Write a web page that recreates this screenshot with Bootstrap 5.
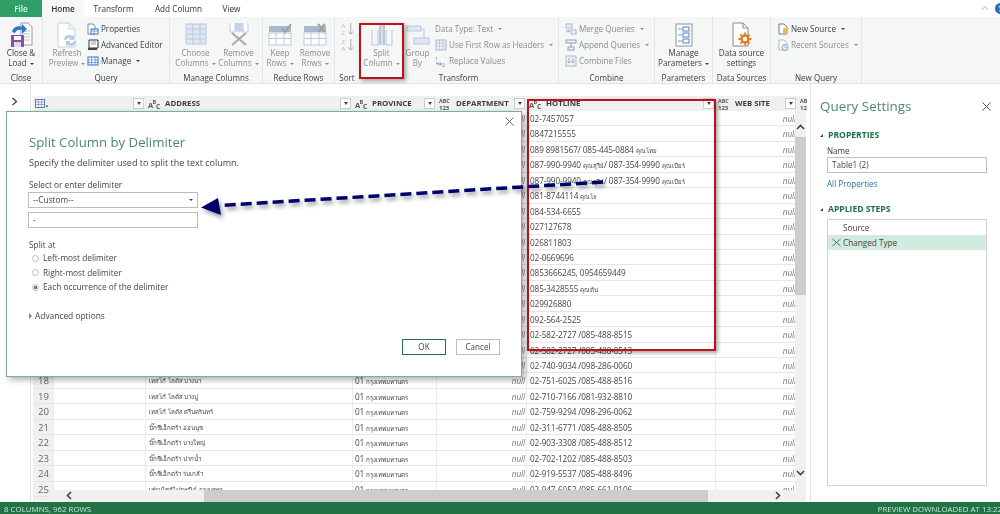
<!DOCTYPE html>
<html lang="th">
<head>
<meta charset="utf-8">
<title>Split Column by Delimiter</title>
<link rel="stylesheet" href="https://cdn.jsdelivr.net/npm/bootstrap@5.3.0/dist/css/bootstrap.min.css">
<style>
html,body{height:514px;width:1000px;overflow:hidden}
body{font-family:"Open Sans","Noto Sans",sans-serif;font-size:8.1px;color:#3c3c3c;background:#fff;line-height:1.2;filter:blur(.3px)}
.tabstrip{height:17px;align-items:stretch}
.tabitem{display:flex;align-items:center;justify-content:center;font-size:8.2px;color:#333;text-decoration:none;padding-top:1px}
.tabfile{width:42px;background:#2f9e67;color:#e8f5ee;font-weight:600}
.tabhome{width:42px;background:#f6f8f7;font-weight:600}
.tabtransform{width:59px}
.tabaddcol{width:71px}
.tabview{width:35px}
.wintools{margin-left:auto;gap:6px}
.helpdot{width:11px;height:11px;border-radius:50%;background:#1f74bd;margin-right:-6px;margin-top:3px;color:#fff;font-size:8px;font-weight:700;text-align:center;line-height:11px}
.ribbon{height:67px;background:#f5f7f6;border-bottom:1px solid #dde5e0}
.rgroup{display:flex;flex-direction:column;border-right:1px solid #e3e8e5;flex:none}
.rgroup.noline{border-right:0}
.rbody{display:flex;flex:1;min-height:0}
.rbodyinset{padding-left:6px}
.rlabel{height:13px;line-height:12px;text-align:center;color:#3c3c3c;font-size:8.1px;margin-bottom:-2px}
.bigbtn{display:flex;flex-direction:column;align-items:center;flex:none;text-align:center;line-height:10px;padding-top:5px;color:#3c3c3c}
.bigbtn svg{height:26px;width:26px;flex:none}
.bigbtn.isoff,.isoff{color:#8c8c8c}
.smalllist{display:flex;flex-direction:column;padding-top:4px;flex:none}
.sortstack{gap:2px;padding-top:5px}
.smallitem{height:16px;display:flex;align-items:center;gap:2px;white-space:nowrap}
.smallitem svg{width:12px;height:12px;flex:none}
.caretdn{display:inline-block;border-left:2px solid transparent;border-right:2px solid transparent;border-top:2.5px solid currentColor;margin-left:3px;vertical-align:middle}
.workarea{height:418px;min-height:0}
.collapsebar{width:31px;border-right:1px solid #e1e5e3;flex:none;padding:12px 0 0 10px}
.gridwrap{width:776px;padding:12px 0 0 2px;flex:none;position:relative;overflow:hidden}
.hrow,.drow{display:grid;grid-template-columns:21px 92px 207px 84px 90px 189px 82px 30px;width:765px}
.hrow{height:15px;background:#f0f0f0;font-weight:700;color:#3c3c3c;font-size:7.8px;width:785px}
.hcell{display:flex;align-items:center;position:relative;white-space:nowrap;padding-left:2px;gap:4px;overflow:hidden}
.filterbox{position:absolute;right:2px;top:2px;width:11px;height:11px;background:#fff;border:1px solid #ccc;display:flex;align-items:center;justify-content:center}
.filterbox::after{content:"";border-left:2.5px solid transparent;border-right:2.5px solid transparent;border-top:3px solid #444}
.typeicon{width:13px;height:13px;flex:none}
.gridbody{height:392px;overflow:hidden;position:relative}
.drow{height:15.45px;font-size:8.2px;letter-spacing:-.1px;color:#444;border-bottom:1px solid #e6e6e6;line-height:14.5px;background:#fff}
.drow>div{border-right:1px solid #ececec;padding:1px 3px 0;white-space:nowrap;overflow:hidden}
.drow .rownum{background:#f0f0f0;border-right:0;padding:1px 0 0;text-align:center;font-size:9.6px;letter-spacing:0;color:#666}
.drow .thaicell{font-size:6.2px;letter-spacing:0;padding-left:3px}
.thaitiny{font-size:6.2px;letter-spacing:0}
.drow .nullcell{font-style:italic;text-align:right;padding-right:1px;font-size:8.2px;color:#777}
.drow .provcell{padding-left:2px}
.vscroll{position:absolute;left:764px;top:27px;width:11px;height:379px;background:#f0f0f0}
.vthumb{position:absolute;top:26px;left:0;width:11px;height:158px;background:#cdcdcd}
.chevup{left:1px;top:12px}
.chevdown{left:1px;top:357px}
.hscroll{position:absolute;left:22px;bottom:0;width:753px;height:12px;background:#f0f0f0}
.hthumb{position:absolute;left:151px;top:0;height:12px;width:504px;background:#cdcdcd}
.chevleft{left:12px;top:1px}
.chevright{left:720px;top:1px}
.chev{position:absolute;width:9px;height:9px}
.settingspane{flex:1;border-left:1px solid #e1e5e3;margin-left:3px;padding:0 12px 0 9px;position:relative;color:#3c3c3c}
.panetitle{font-size:13.4px;color:#4b8873;margin:12px 0 14px;font-weight:400;line-height:20px}
.paneclose{position:absolute;right:9px;top:18px;width:9px;height:9px}
.sectionhead{font-size:8.6px;font-weight:700;color:#217346;margin:0;height:11px;line-height:11px;display:flex;align-items:center;gap:5px}
.sectionhead::before{content:"";border-left:3px solid transparent;border-bottom:3px solid #444}
.paneinput{height:16px;margin:1px 0 0 7px;border:1px solid #bfbfbf;padding:0 4px;line-height:14px;width:160px;color:#444}
.panelabel{margin:5px 0 0 7px;height:10px;line-height:10px}
.panelink{display:block;margin:6px 0 15px 7px;color:#2d6fb7;text-decoration:none;line-height:10px}
.steplist{margin:4px 0 0 7px;width:160px;height:267px;border:1px solid #d2d2d2;border-radius:0;display:block}
.stepitem{height:15px;line-height:15px;border:0;padding:0 0 0 15px;background:transparent;color:#444;font-size:8.2px;position:relative;display:block}
.stepitem.picked{background:#d3ebde}
.stepitem svg{position:absolute;left:4px;top:3px;width:9px;height:9px}
.statusbar{height:12px;background:#217346;color:#cfe3d8;font-size:7.9px;line-height:15px;padding-left:4px;overflow:hidden;white-space:nowrap}
.statusright{margin-left:auto;margin-right:-2px}
.splitdialog{position:absolute;left:6px;top:111px;width:516px;height:266px;background:#fff;border:1px solid #7fae98;box-shadow:3px 3px 6px rgba(0,0,0,.3);padding:20px 22px 0 22px;font-size:8.3px;color:#444}
.dlgclose{position:absolute;right:7px;top:5px;width:9px;height:9px}
.dlgtitle{font-size:13.2px;font-weight:400;color:#4b8873;line-height:20px;margin:0 0 5px}
.dlgtext{height:12px;line-height:12px;margin:0;white-space:nowrap}
.dlgintro{font-size:9px}
.dlgfirstlabel{margin-top:10px}
.dlgsplitlabel{margin-top:11px}
.dlgfield{width:170px;height:16px;border:1px solid #bdbdbd;padding:0 4px;line-height:14px;display:flex;justify-content:space-between;align-items:center;color:#444;background:#fff;margin:4px 0 0 -1px}
.dlgfield.firstfield{margin-top:1px}
.radioline{height:14.5px;display:flex;align-items:center;gap:4px;padding-left:3px}
.radiodot{width:7px;height:7px;border:1px solid #bbb;border-radius:50%;flex:none;background:#fff}
.radiodot.ison{background:radial-gradient(circle,#777 0 1.6px,#fff 2.1px)}
.advline{display:flex;align-items:center;gap:3px;margin-top:15.5px;height:12px;font-size:8.4px}
.advline::before{content:"";border-left:3px solid #888;border-top:3px solid transparent;border-bottom:3px solid transparent}
.dlgbtns{position:absolute;left:395px;top:227px;gap:10px}
.dlgbtn{height:16px;width:44px;padding:0;font-size:8.1px;line-height:14px;border-radius:0;border:1px solid #bdbdbd;background:#fff;color:#444}
.dlgbtn.isdefault{border-color:#217346}
.redmark{position:absolute;border:2px solid #c0101c;box-shadow:2px 2px 4px rgba(0,0,0,.35);pointer-events:none}
.redhotline{left:527px;top:99px;width:189px;height:252px}
.redsplit{left:359px;top:23px;width:45px;height:56px}
.arrowlayer{position:absolute;left:190px;top:170px;width:430px;height:50px;overflow:visible;filter:drop-shadow(2px 3px 2px rgba(0,0,0,.4))}
</style>
</head>
<body class="position-relative d-flex flex-column">

<nav class="nav tabstrip flex-nowrap">
  <a class="tabitem tabfile" href="#">File</a>
  <a class="tabitem tabhome" href="#">Home</a>
  <a class="tabitem tabtransform" href="#">Transform</a>
  <a class="tabitem tabaddcol" href="#">Add Column</a>
  <a class="tabitem tabview" href="#">View</a>
  <div class="d-flex wintools">
    <svg width="8" height="8" viewBox="0 0 8 8" class="mt-1"><path d="M1 5.500 4 2.500 7 5.500" fill="none" stroke="#aaa"/></svg>
    <div class="helpdot">?</div>
  </div>
</nav>

<div class="ribbon d-flex">
  <section class="rgroup" style="width:43px">
    <div class="rbody justify-content-center">
      <div class="bigbtn">
        <svg viewBox="0 0 26 26"><path d="M13 1h7l4 4v18H13z" fill="#fff" stroke="#9a9a9a"/><path d="M15 9h7M15 12h7M15 15h7M15 18h7" stroke="#bbb"/><path d="M4 10c1-5 6-7 10-5V2l5 5-5 5V8c-3-1-6 0-7 3z" fill="#2f76c6"/><rect x="3" y="13" width="13" height="12" fill="#8a4fa8"/><rect x="6" y="14" width="7" height="4" fill="#fff"/><rect x="6" y="20" width="7" height="5" fill="#e3d5ea"/></svg>
        <span>Close &amp;<br>Load<i class="caretdn"></i></span>
      </div>
    </div>
    <div class="rlabel">Close</div>
  </section>

  <section class="rgroup" style="width:127px">
    <div class="rbody ps-1">
      <div class="bigbtn isoff" style="width:40px">
        <svg viewBox="0 0 26 26"><path d="M4 1h11l6 6v18H4z" fill="#fff" stroke="#c5d3e6"/><path d="M15 1v6h6" fill="none" stroke="#c5d3e6"/><path d="M10 18a5 5 0 0 1 8-4l2-1v5h-5l1.500-1.500a3 3 0 0 0-4.500 1.500zM22 19a5 5 0 0 1-8 4l-2 1v-5h5l-1.500 1.500a3 3 0 0 0 4.500-1.500z" fill="#b9c9de"/></svg>
        <span>Refresh<br>Preview<i class="caretdn"></i></span>
      </div>
      <div class="smalllist">
        <div class="smallitem"><svg viewBox="0 0 12 12"><path d="M1 1h5l2 2v8H1z" fill="#fff" stroke="#888"/><rect x="4" y="6" width="7" height="5" fill="#fff" stroke="#2f76c6"/><path d="M4 8h7M7 6v5" stroke="#2f76c6" stroke-width=".6"/></svg>Properties</div>
        <div class="smallitem"><svg viewBox="0 0 12 12"><path d="M2 1h9v8H2z" fill="#fff" stroke="#333"/><path d="M1 9h9v2H1z" fill="#444"/><path d="M4 3h5M4 5h5" stroke="#999"/></svg>Advanced Editor</div>
        <div class="smallitem"><svg viewBox="0 0 12 12"><rect x="1" y="2" width="10" height="8" fill="#fff" stroke="#2f76c6"/><path d="M1 5h10M1 7.500h10M4.500 2v8M8 2v8" stroke="#2f76c6" stroke-width=".6"/></svg>Manage<i class="caretdn"></i></div>
      </div>
    </div>
    <div class="rlabel">Query</div>
  </section>

  <section class="rgroup" style="width:93px">
    <div class="rbody ps-1">
      <div class="bigbtn isoff" style="width:43px">
        <svg viewBox="0 0 26 26"><rect x="3" y="2" width="20" height="20" fill="#dfe7f2" stroke="#b9c9de"/><path d="M3 7h20M3 12h20M3 17h20M10 2v20M17 2v20" stroke="#b9c9de"/></svg>
        <span>Choose<br>Columns<i class="caretdn"></i></span>
      </div>
      <div class="bigbtn isoff" style="width:43px">
        <svg viewBox="0 0 26 26"><path d="M4 1v9h5V1M10 1v8h6V1M17 1v9h5V1" fill="#fff" stroke="#b9c9de"/><path d="M10 1h6v8h-6z" fill="#c5d3e6"/><path d="M6 11l14 12M20 11 6 23" stroke="#a9a9b3" stroke-width="2"/></svg>
        <span>Remove<br>Columns<i class="caretdn"></i></span>
      </div>
    </div>
    <div class="rlabel">Manage Columns</div>
  </section>

  <section class="rgroup" style="width:72px">
    <div class="rbody">
      <div class="bigbtn isoff" style="width:34px">
        <svg viewBox="0 0 26 26"><rect x="2" y="4" width="22" height="6" fill="#a9b9cd"/><rect x="2" y="11" width="22" height="12" fill="#fff" stroke="#b9c9de"/><path d="M2 16.500h22M9 11v12M17 11v12" stroke="#b9c9de"/><path d="M15 7l3 3 6-8" fill="none" stroke="#a0a0a8" stroke-width="2"/></svg>
        <span>Keep<br>Rows<i class="caretdn"></i></span>
      </div>
      <div class="bigbtn isoff" style="width:36px">
        <svg viewBox="0 0 26 26"><rect x="2" y="4" width="22" height="6" fill="#a9b9cd"/><rect x="2" y="11" width="22" height="12" fill="#fff" stroke="#b9c9de"/><path d="M2 16.500h22M9 11v12M17 11v12" stroke="#b9c9de"/><path d="M16 2l7 8M23 2l-7 8" stroke="#a0a0a8" stroke-width="2"/></svg>
        <span>Remove<br>Rows<i class="caretdn"></i></span>
      </div>
    </div>
    <div class="rlabel">Reduce Rows</div>
  </section>

  <section class="rgroup noline" style="width:24px">
    <div class="rbody justify-content-center">
      <div class="smalllist sortstack">
        <svg width="13" height="14" viewBox="0 0 13 15" aria-label="Sort ascending"><text x="0" y="6.500" font-size="6.500" fill="#a9b9cd">A</text><text x="0" y="13.500" font-size="6.500" fill="#a9b9cd">Z</text><path d="M10 1v12M7.500 10 10 13l2.500-3" fill="none" stroke="#a9a9b3"/></svg>
        <svg width="13" height="14" viewBox="0 0 13 15" aria-label="Sort descending"><text x="0" y="6.500" font-size="6.500" fill="#a9b9cd">Z</text><text x="0" y="13.500" font-size="6.500" fill="#a9b9cd">A</text><path d="M10 1v12M7.500 10 10 13l2.500-3" fill="none" stroke="#a9a9b3"/></svg>
      </div>
    </div>
    <div class="rlabel">Sort</div>
  </section>

  <section class="rgroup" style="width:200px">
    <div class="rbody">
      <div class="bigbtn isoff" style="width:45px">
        <svg viewBox="0 0 26 26"><path d="M3 8v15h6V8M17 8v15h6V8" fill="none" stroke="#b9c9de"/><rect x="10" y="2" width="2.500" height="21" fill="#b9c9de"/><rect x="13.500" y="2" width="2.500" height="21" fill="#b9c9de"/></svg>
        <span>Split<br>Column<i class="caretdn"></i></span>
      </div>
      <div class="bigbtn isoff" style="width:27px">
        <svg viewBox="0 0 26 26"><rect x="2" y="4" width="14" height="5" fill="#dfe7f2" stroke="#b9c9de"/><rect x="9" y="16" width="15" height="6" fill="#dfe7f2" stroke="#b9c9de"/><path d="M16 7h3v9" fill="none" stroke="#b9c9de"/></svg>
        <span>Group<br>By</span>
      </div>
      <div class="smalllist isoff ps-1">
        <div class="smallitem">Data Type: Text<i class="caretdn"></i></div>
        <div class="smallitem"><svg viewBox="0 0 12 12"><rect x="1" y="1" width="10" height="10" fill="#eef2f8" stroke="#a9b9cd"/><path d="M1 4h10M1 7h10M4.500 1v10M8 1v10" stroke="#a9b9cd" stroke-width=".6"/></svg>Use First Row as Headers<i class="caretdn"></i></div>
        <div class="smallitem"><svg viewBox="0 0 12 12" aria-label="Replace"><text x="0" y="5.500" font-size="5.500" fill="#888">1</text><text x="7" y="11.500" font-size="5.500" fill="#888">2</text><path d="M2 7v2h4M5 7.500 6.500 9 5 10.500" fill="none" stroke="#2f76c6" stroke-width=".8"/></svg>Replace Values</div>
      </div>
    </div>
    <div class="rlabel">Transform</div>
  </section>

  <section class="rgroup" style="width:96px">
    <div class="rbody rbodyinset">
      <div class="smalllist isoff">
        <div class="smallitem"><svg viewBox="0 0 12 12"><rect x="1" y="1" width="6" height="4" fill="#eef2f8" stroke="#a9b9cd"/><rect x="6" y="7" width="5" height="4" fill="#eef2f8" stroke="#a9b9cd"/><path d="M1 8h3M3 6.500 4.500 8 3 9.500" fill="none" stroke="#7f93ad" stroke-width=".8"/></svg>Merge Queries<i class="caretdn"></i></div>
        <div class="smallitem"><svg viewBox="0 0 12 12"><rect x="1" y="1" width="10" height="3" fill="#eef2f8" stroke="#8ba0bb"/><rect x="3" y="8" width="6" height="3" fill="#eef2f8" stroke="#8ba0bb"/><path d="M6 4v4" stroke="#8ba0bb"/></svg>Append Queries<i class="caretdn"></i></div>
        <div class="smallitem"><svg viewBox="0 0 12 12"><rect x="1" y="1" width="10" height="10" fill="#eef2f8" stroke="#a9b9cd"/><path d="M4 3v5M2.500 6.500 4 8l1.500-1.500M8 3v5M6.500 6.500 8 8l1.500-1.500" fill="none" stroke="#7f93ad" stroke-width=".7"/></svg>Combine Files</div>
      </div>
    </div>
    <div class="rlabel">Combine</div>
  </section>

  <section class="rgroup" style="width:58px">
    <div class="rbody justify-content-center">
      <div class="bigbtn">
        <svg viewBox="0 0 26 26"><rect x="5" y="2" width="16" height="22" fill="#fff" stroke="#8a93a0"/><rect x="12" y="5" width="6" height="4" fill="none" stroke="#4b83c4"/><rect x="12" y="11" width="6" height="4" fill="none" stroke="#4b83c4"/><rect x="12" y="17" width="6" height="4" fill="none" stroke="#4b83c4"/><path d="M7 7h4M7 13h4M7 19h4" stroke="#8a93a0"/></svg>
        <span>Manage<br>Parameters<i class="caretdn"></i></span>
      </div>
    </div>
    <div class="rlabel">Parameters</div>
  </section>

  <section class="rgroup" style="width:58px">
    <div class="rbody justify-content-center">
      <div class="bigbtn">
        <svg viewBox="0 0 26 26"><path d="M4 1h10l5 5v18H4z" fill="#fff" stroke="#8a8a8a"/><path d="M14 1v5h5" fill="none" stroke="#8a8a8a"/><circle cx="16" cy="17" r="3.500" fill="none" stroke="#e67e22" stroke-width="2.500"/><path d="M16 10.500v3M16 20.500v3M9.500 17h3M19.500 17h3M11.500 12.500l2 2M18.500 19.500l2 2M20.500 12.500l-2 2M13.500 19.500l-2 2" stroke="#e67e22" stroke-width="1.800"/></svg>
        <span>Data source<br>settings</span>
      </div>
    </div>
    <div class="rlabel">Data Sources</div>
  </section>

  <section class="rgroup" style="width:91px">
    <div class="rbody rbodyinset">
      <div class="smalllist">
        <div class="smallitem"><svg viewBox="0 0 12 12"><path d="M2 1h5l3 3v7H2z" fill="#fff" stroke="#777"/><rect x="6" y="5" width="5" height="6" rx="1" fill="#e5b85c"/></svg>New Source<i class="caretdn"></i></div>
        <div class="smallitem isoff"><svg viewBox="0 0 12 12"><path d="M2 1h5l3 3v7H2z" fill="#fff" stroke="#a9b9cd"/><circle cx="8" cy="8.500" r="3" fill="#eef2f8" stroke="#8ba0bb"/><path d="M8 7v1.500h1.500" fill="none" stroke="#8ba0bb" stroke-width=".7"/></svg>Recent Sources<i class="caretdn"></i></div>
      </div>
    </div>
    <div class="rlabel">New Query</div>
  </section>
</div>

<main class="workarea d-flex">
  <div class="collapsebar">
    <svg width="9" height="9" viewBox="0 0 9 9"><path d="M2.500 1 6.500 4.500 2.500 8" fill="none" stroke="#444" stroke-width="1.300"/></svg>
  </div>

  <div class="gridwrap">
    <div class="hrow">
      <div class="hcell"><svg width="14" height="10" viewBox="0 0 14 10"><rect x=".5" y=".5" width="9" height="8" fill="#fff" stroke="#5b7ea8"/><path d="M.5 3h9M.5 5.500h9M3.500.5v8M6.500.5v8" stroke="#5b7ea8" stroke-width=".6"/><path d="M10.500 6.500h3L12 8.500z" fill="#555"/></svg></div>
      <div class="hcell"><span class="filterbox"></span></div>
      <div class="hcell"><svg class="typeicon" viewBox="0 0 13 13" aria-label="Text"><text x="0" y="11" font-size="7.500" fill="#555">A</text><text x="4.500" y="6.500" font-size="5.500" fill="#555">B</text><text x="8" y="12" font-size="6.500" fill="#555">C</text></svg>ADDRESS<span class="filterbox"></span></div>
      <div class="hcell"><svg class="typeicon" viewBox="0 0 13 13" aria-label="Text"><text x="0" y="11" font-size="7.500" fill="#555">A</text><text x="4.500" y="6.500" font-size="5.500" fill="#555">B</text><text x="8" y="12" font-size="6.500" fill="#555">C</text></svg>PROVINCE<span class="filterbox"></span></div>
      <div class="hcell"><svg class="typeicon" viewBox="0 0 13 13" aria-label="Any"><text x="0" y="5.800" font-size="5.400" font-weight="700" fill="#555">ABC</text><text x="0" y="12.500" font-size="6" font-weight="700" fill="#555">123</text></svg>DEPARTMENT<span class="filterbox"></span></div>
      <div class="hcell"><svg class="typeicon" viewBox="0 0 13 13" aria-label="Text"><text x="0" y="11" font-size="7.500" fill="#555">A</text><text x="4.500" y="6.500" font-size="5.500" fill="#555">B</text><text x="8" y="12" font-size="6.500" fill="#555">C</text></svg>HOTLINE<span class="filterbox"></span></div>
      <div class="hcell"><svg class="typeicon" viewBox="0 0 13 13" aria-label="Any"><text x="0" y="5.800" font-size="5.400" font-weight="700" fill="#555">ABC</text><text x="0" y="12.500" font-size="6" font-weight="700" fill="#555">123</text></svg>WEB SITE<span class="filterbox"></span></div>
      <div class="hcell"><svg class="typeicon" viewBox="0 0 13 13" aria-label="Any"><text x="0" y="5.800" font-size="5.400" font-weight="700" fill="#555">ABC</text><text x="0" y="12.500" font-size="6" font-weight="700" fill="#555">123</text></svg></div>
    </div>
    <div class="gridbody">
      <div class="drow"><div class="rownum"></div><div></div><div></div><div></div><div class="nullcell">null</div><div>02-7457057</div><div class="nullcell">null</div></div>
      <div class="drow"><div class="rownum"></div><div></div><div></div><div></div><div class="nullcell">null</div><div>0847215555</div><div class="nullcell">null</div></div>
      <div class="drow"><div class="rownum"></div><div></div><div></div><div></div><div class="nullcell">null</div><div>089 8981567/ 085-445-0884 <span class="thaitiny">คุณโทย</span></div><div class="nullcell">null</div></div>
      <div class="drow"><div class="rownum"></div><div></div><div></div><div></div><div class="nullcell">null</div><div>087-990-9940 <span class="thaitiny">คุณสุรีย์</span>/ 087-354-9990 <span class="thaitiny">คุณเบียร์</span></div><div class="nullcell">null</div></div>
      <div class="drow"><div class="rownum"></div><div></div><div></div><div></div><div class="nullcell">null</div><div>087-990-9940 <span class="thaitiny">คุณสุรีย์</span>/ 087-354-9990 <span class="thaitiny">คุณเบียร์</span></div><div class="nullcell">null</div></div>
      <div class="drow"><div class="rownum"></div><div></div><div></div><div></div><div class="nullcell">null</div><div>081-8744114 <span class="thaitiny">คุณโจ</span></div><div class="nullcell">null</div></div>
      <div class="drow"><div class="rownum"></div><div></div><div></div><div></div><div class="nullcell">null</div><div>084-534-6655</div><div class="nullcell">null</div></div>
      <div class="drow"><div class="rownum"></div><div></div><div></div><div></div><div class="nullcell">null</div><div>027127678</div><div class="nullcell">null</div></div>
      <div class="drow"><div class="rownum"></div><div></div><div></div><div></div><div class="nullcell">null</div><div>026811803</div><div class="nullcell">null</div></div>
      <div class="drow"><div class="rownum"></div><div></div><div></div><div></div><div class="nullcell">null</div><div>02-0669696</div><div class="nullcell">null</div></div>
      <div class="drow"><div class="rownum"></div><div></div><div></div><div></div><div class="nullcell">null</div><div>0853666245, 0954659449</div><div class="nullcell">null</div></div>
      <div class="drow"><div class="rownum"></div><div></div><div></div><div></div><div class="nullcell">null</div><div>085-3428555 <span class="thaitiny">คุณต้น</span></div><div class="nullcell">null</div></div>
      <div class="drow"><div class="rownum"></div><div></div><div></div><div></div><div class="nullcell">null</div><div>029926880</div><div class="nullcell">null</div></div>
      <div class="drow"><div class="rownum"></div><div></div><div></div><div></div><div class="nullcell">null</div><div>092-564-2525</div><div class="nullcell">null</div></div>
      <div class="drow"><div class="rownum"></div><div></div><div></div><div></div><div class="nullcell">null</div><div>02-582-2727 /085-488-8515</div><div class="nullcell">null</div></div>
      <div class="drow"><div class="rownum"></div><div></div><div></div><div></div><div class="nullcell">null</div><div>02-582-2727 /085-488-8513</div><div class="nullcell">null</div></div>
      <div class="drow"><div class="rownum"></div><div></div><div></div><div></div><div class="nullcell">null</div><div>02-740-9034 /098-286-0060</div><div class="nullcell">null</div></div>
      <div class="drow"><div class="rownum">18</div><div></div><div class="thaicell">เทสโก้ โลตัส บางนา</div><div class="provcell">01 <span class="thaitiny">กรุงเทพมหานคร</span></div><div class="nullcell">null</div><div>02-751-6025 /085-488-8516</div><div class="nullcell">null</div></div>
      <div class="drow"><div class="rownum">19</div><div></div><div class="thaicell">เทสโก้ โลตัส บางปู</div><div class="provcell">01 <span class="thaitiny">กรุงเทพมหานคร</span></div><div class="nullcell">null</div><div>02-710-7166 /081-932-8810</div><div class="nullcell">null</div></div>
      <div class="drow"><div class="rownum">20</div><div></div><div class="thaicell">เทสโก้ โลตัส ศรีนครินทร์</div><div class="provcell">01 <span class="thaitiny">กรุงเทพมหานคร</span></div><div class="nullcell">null</div><div>02-759-9294 /098-296-0062</div><div class="nullcell">null</div></div>
      <div class="drow"><div class="rownum">21</div><div></div><div class="thaicell">บิ๊กซีเอ็กตร้า อ่อนนุช</div><div class="provcell">01 <span class="thaitiny">กรุงเทพมหานคร</span></div><div class="nullcell">null</div><div>02-311-6771 /085-488-8505</div><div class="nullcell">null</div></div>
      <div class="drow"><div class="rownum">22</div><div></div><div class="thaicell">บิ๊กซีเอ็กตร้า บางใหญ่</div><div class="provcell">01 <span class="thaitiny">กรุงเทพมหานคร</span></div><div class="nullcell">null</div><div>02-903-3308 /085-488-8512</div><div class="nullcell">null</div></div>
      <div class="drow"><div class="rownum">23</div><div></div><div class="thaicell">บิ๊กซีเอ็กตร้า ปากน้ำ</div><div class="provcell">01 <span class="thaitiny">กรุงเทพมหานคร</span></div><div class="nullcell">null</div><div>02-702-1202 /085-488-8503</div><div class="nullcell">null</div></div>
      <div class="drow"><div class="rownum">24</div><div></div><div class="thaicell">บิ๊กซีเอ็กตร้า ร่มเกล้า</div><div class="provcell">01 <span class="thaitiny">กรุงเทพมหานคร</span></div><div class="nullcell">null</div><div>02-919-5537 /085-488-8496</div><div class="nullcell">null</div></div>
      <div class="drow"><div class="rownum">25</div><div></div><div class="thaicell">เฟรนไชส์ไปรษณีย์ กรุงเทพฯ</div><div class="provcell">01 <span class="thaitiny">กรุงเทพมหานคร</span></div><div class="nullcell">null</div><div>02-947-6052 /085-661-9106</div><div class="nullcell">null</div></div>
      <div class="drow"><div class="rownum"></div></div>
    </div>
    <div class="vscroll">
      <div class="vthumb"></div>
      <svg class="chev chevup" viewBox="0 0 9 9"><path d="M1 6 4.500 2.500 8 6" fill="none" stroke="#444" stroke-width="1.600"/></svg>
      <svg class="chev chevdown" viewBox="0 0 9 9"><path d="M1 3 4.500 6.500 8 3" fill="none" stroke="#444" stroke-width="1.600"/></svg>
    </div>
    <div class="hscroll">
      <div class="hthumb"></div>
      <svg class="chev chevleft" viewBox="0 0 9 9"><path d="M6 1 2.500 4.500 6 8" fill="none" stroke="#444" stroke-width="1.600"/></svg>
      <svg class="chev chevright" viewBox="0 0 9 9"><path d="M3 1 6.500 4.500 3 8" fill="none" stroke="#444" stroke-width="1.600"/></svg>
    </div>
  </div>

  <aside class="settingspane">
    <h1 class="panetitle">Query Settings</h1>
    <svg class="paneclose" viewBox="0 0 9 9"><path d="M.5.5l8 8M8.500.5l-8 8" stroke="#555"/></svg>
    <h2 class="sectionhead">PROPERTIES</h2>
    <div class="panelabel">Name</div>
    <div class="paneinput">Table1 (2)</div>
    <a class="panelink" href="#">All Properties</a>
    <h2 class="sectionhead">APPLIED STEPS</h2>
    <ul class="list-group steplist">
      <li class="list-group-item stepitem">Source</li>
      <li class="list-group-item stepitem picked"><svg viewBox="0 0 9 9"><path d="M.5 1l8 7M8.500 1l-8 7" stroke="#666"/></svg>Changed Type</li>
    </ul>
  </aside>
</main>

<footer class="statusbar d-flex">
  <span>8 COLUMNS, 962 ROWS</span>
  <span class="statusright">PREVIEW DOWNLOADED AT 13:22</span>
</footer>

<div class="redmark redhotline"></div>
<div class="redmark redsplit"></div>

<div class="splitdialog">
  <svg class="dlgclose" viewBox="0 0 9 9"><path d="M.5.5l8 8M8.500.5l-8 8" stroke="#666"/></svg>
  <h2 class="dlgtitle">Split Column by Delimiter</h2>
  <p class="dlgtext dlgintro">Specify the delimiter used to split the text column.</p>
  <p class="dlgtext dlgfirstlabel">Select or enter delimiter</p>
  <div class="dlgfield firstfield"><span>--Custom--</span><i class="caretdn"></i></div>
  <div class="dlgfield">-</div>
  <p class="dlgtext dlgsplitlabel">Split at</p>
  <div class="radioline"><span class="radiodot"></span>Left-most delimiter</div>
  <div class="radioline"><span class="radiodot"></span>Right-most delimiter</div>
  <div class="radioline"><span class="radiodot ison"></span>Each occurrence of the delimiter</div>
  <div class="advline">Advanced options</div>
  <div class="dlgbtns d-flex">
    <button type="button" class="btn dlgbtn isdefault">OK</button>
    <button type="button" class="btn dlgbtn">Cancel</button>
  </div>
</div>

<svg class="arrowlayer" viewBox="0 0 430 50" aria-hidden="true">
  <path d="M413 12 30 35.500" fill="none" stroke="#00006e" stroke-width="3.500" stroke-dasharray="11 5"/>
  <path d="M11 37.500 28 28 31 45z" fill="#00006e"/>
</svg>

<script src="https://cdn.jsdelivr.net/npm/bootstrap@5.3.0/dist/js/bootstrap.bundle.min.js"></script>
</body>
</html>
